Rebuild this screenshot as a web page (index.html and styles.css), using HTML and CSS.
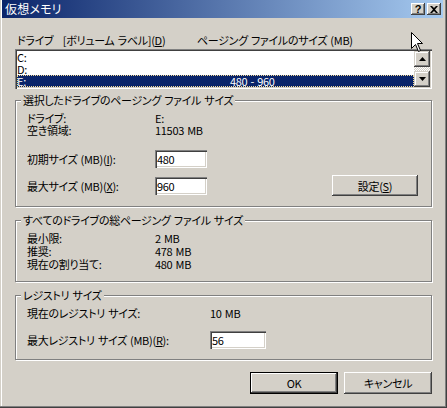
FILE: index.html
```html
<!DOCTYPE html>
<html lang="ja">
<head>
<meta charset="utf-8">
<title>仮想メモリ</title>
<link rel="stylesheet" href="styles.css">
</head>
<body>
<div class="window">
  <div class="titlebar">
    <span class="title">仮想メモリ</span>
    <div class="caption-btns">
      <span class="cbtn help">?</span>
      <span class="cbtn close"><svg width="8" height="7" viewBox="0 0 8 7"><path d="M0 0h2l2 2 2-2h2L5 3.5 8 7H6L4 5 2 7H0l3-3.5z" fill="#000"/></svg></span>
    </div>
  </div>
  <div class="content">
    <div class="list-head">
      <span class="lh1">ドライブ&nbsp;&nbsp;&nbsp;[ボリューム ラベル](<u>D</u>)</span>
      <span class="lh2">ページング ファイルのサイズ (MB)</span>
    </div>
    <div class="listbox">
      <div class="rows">
        <div class="row"><span class="c1">C:</span></div>
        <div class="row"><span class="c1">D:</span></div>
        <div class="row sel"><span class="c1">E:</span><span>480 - 960</span></div>
      </div>
      <div class="scrollbar">
        <div class="sbtn"><svg width="7" height="4" viewBox="0 0 7 4"><path d="M3.5 0L7 4H0z" fill="#000"/></svg></div>
        <div class="track"></div>
        <div class="sbtn"><svg width="7" height="4" viewBox="0 0 7 4"><path d="M0 0h7L3.5 4z" fill="#000"/></svg></div>
      </div>
    </div>

    <fieldset class="group g1">
      <legend>選択したドライブのページング ファイル サイズ</legend>
      <div class="kv">
        <span>ドライブ:</span><span>E:</span>
        <span>空き領域:</span><span>11503 MB</span>
      </div>
      <div class="frow first">
        <span class="flabel">初期サイズ (MB)(<u>I</u>):</span>
        <input class="edit" type="text" value="480">
      </div>
      <div class="frow second">
        <span class="flabel">最大サイズ (MB)(<u>X</u>):</span>
        <input class="edit" type="text" value="960">
        <span class="btn set">設定(<u>S</u>)</span>
      </div>
    </fieldset>

    <fieldset class="group g2">
      <legend>すべてのドライブの総ページング ファイル サイズ</legend>
      <div class="kv tall">
        <span>最小限:</span><span>2 MB</span>
        <span>推奨:</span><span>478 MB</span>
        <span>現在の割り当て:</span><span>480 MB</span>
      </div>
    </fieldset>

    <fieldset class="group g3">
      <legend>レジストリ サイズ</legend>
      <div class="kv wide">
        <span>現在のレジストリ サイズ:</span><span>10 MB</span>
      </div>
      <div class="frow reg">
        <span class="flabel">最大レジストリ サイズ (MB)(<u>R</u>):</span>
        <input class="edit wide-edit" type="text" value="56">
      </div>
    </fieldset>

    <div class="actions">
      <span class="btn big default">OK</span>
      <span class="btn big">キャンセル</span>
    </div>
  </div>
  <svg class="cursor" width="13" height="21" viewBox="0 0 13 21"><path d="M0.5 0.5V16.5L4.5 12.5L7.5 19.5L9.5 18.5L6.5 11.5H11.5Z" fill="#fff" stroke="#000" stroke-width="1" stroke-linejoin="miter"/></svg>
</div>
</body>
</html>
```

FILE: styles.css
```css
html, body {
  margin: 0;
  padding: 0;
}

body {
  width: 447px;
  height: 408px;
  overflow: hidden;
  background: #D4D0C8;
  font-family: "Noto Sans CJK JP", "Noto Sans", sans-serif;
  font-size: 11px;
  line-height: 12px;
  letter-spacing: -0.3px;
  word-spacing: 1px;
  color: #000;
  font-feature-settings: "palt" 1;
}

u {
  text-decoration: underline;
  text-underline-offset: 1px;
}

.window {
  position: relative;
  width: 447px;
  height: 408px;
  box-sizing: border-box;
  padding: 0 4px 0 2px;
  background: #D4D0C8;
  box-shadow: inset -1px -1px #404040, inset -2px -2px #808080, inset 1px 0 #D4D0C8, inset 2px 0 #fff;
}

.titlebar {
  height: 18px;
  display: flex;
  align-items: center;
  padding: 0 2px 0 3px;
  background: linear-gradient(to right, #0A246A, #A6CAF0);
  color: #fff;
}

.title {
  font-size: 12px;
  line-height: 12px;
  letter-spacing: 0.2px;
}

.caption-btns {
  margin-left: auto;
  display: flex;
  gap: 2px;
}

.cbtn {
  width: 14px;
  height: 12px;
  box-sizing: border-box;
  display: flex;
  align-items: center;
  justify-content: center;
  background: #D4D0C8;
  color: #000;
  box-shadow: inset -1px -1px #404040, inset 1px 1px #fff, inset -2px -2px #808080;
}

.help {
  font-family: "Liberation Sans", sans-serif;
  font-weight: bold;
  font-size: 11px;
  line-height: 11px;
  letter-spacing: 0;
}

.content {
  margin-left: 13px;
  width: 417px;
}

.list-head {
  margin-top: 16px;
  display: flex;
  height: 12px;
}

.lh1 {
  width: 180px;
  padding-left: 2px;
}

.listbox {
  margin-top: 3px;
  height: 40px;
  box-sizing: border-box;
  padding: 2px;
  display: flex;
  background: #fff;
  box-shadow: inset 1px 1px #808080, inset 2px 2px #404040, inset -1px -1px #fff, inset -2px -2px #D4D0C8;
}

.rows {
  flex: 1;
}

.row {
  height: 12px;
  display: flex;
  line-height: 12px;
}

.row .c1 {
  width: 213px;
}

.row.sel {
  background: #0A246A;
  color: #fff;
  outline: 1px dotted #F5DB95;
  outline-offset: -1px;
}

.scrollbar {
  width: 16px;
  display: flex;
  flex-direction: column;
}

.sbtn {
  height: 16px;
  display: flex;
  align-items: center;
  justify-content: center;
  background: #D4D0C8;
  box-shadow: inset -1px -1px #404040, inset 1px 1px #D4D0C8, inset -2px -2px #808080, inset 2px 2px #fff;
}

.track {
  flex: 1;
  background: repeating-conic-gradient(#fff 0 25%, #D4D0C8 0 50%) 0 0 / 2px 2px;
}

.group {
  margin: 5px 0 0 0;
  padding: 6px 13px 10px 11px;
  border: 1px solid #808080;
  box-shadow: inset 1px 1px #fff, 1px 1px #fff;
  min-width: 0;
}

.group legend {
  padding: 0 2px;
  margin-left: -6px;
  line-height: 12px;
  background: #D4D0C8;
}

.g2, .g3 {
  margin-top: 7px;
}

.kv {
  display: grid;
  grid-template-columns: 128px auto;
  line-height: 12px;
}

.kv.tall {
  line-height: 13px;
}

.kv.wide {
  grid-template-columns: 183px auto;
}

.frow {
  display: flex;
  align-items: center;
}

.frow.first {
  margin-top: 14px;
}

.frow.second {
  margin-top: 7px;
  height: 21px;
}

.frow.reg {
  margin-top: 12px;
}

.flabel {
  width: 128px;
}

.reg .flabel {
  width: 183px;
}

.edit {
  width: 52px;
  height: 18px;
  box-sizing: border-box;
  border: 0;
  margin: 0;
  padding: 0 0 0 2px;
  font: inherit;
  letter-spacing: inherit;
  font-feature-settings: inherit;
  color: #000;
  background: #fff;
  outline: none;
  box-shadow: inset 1px 1px #808080, inset 2px 2px #404040, inset -1px -1px #fff, inset -2px -2px #D4D0C8;
}

.wide-edit {
  width: 56px;
}

.btn {
  display: flex;
  align-items: center;
  justify-content: center;
  box-sizing: border-box;
  background: #D4D0C8;
  box-shadow: inset -1px -1px #404040, inset 1px 1px #fff, inset -2px -2px #808080;
}

.btn.set {
  margin-left: auto;
  width: 86px;
  height: 21px;
}

.actions {
  margin-top: 12px;
  display: flex;
  justify-content: flex-end;
  gap: 6px;
}

.btn.big {
  width: 88px;
  height: 22px;
}

.btn.default {
  border: 1px solid #000;
}

.cursor {
  position: absolute;
  left: 411px;
  top: 32px;
}
```
